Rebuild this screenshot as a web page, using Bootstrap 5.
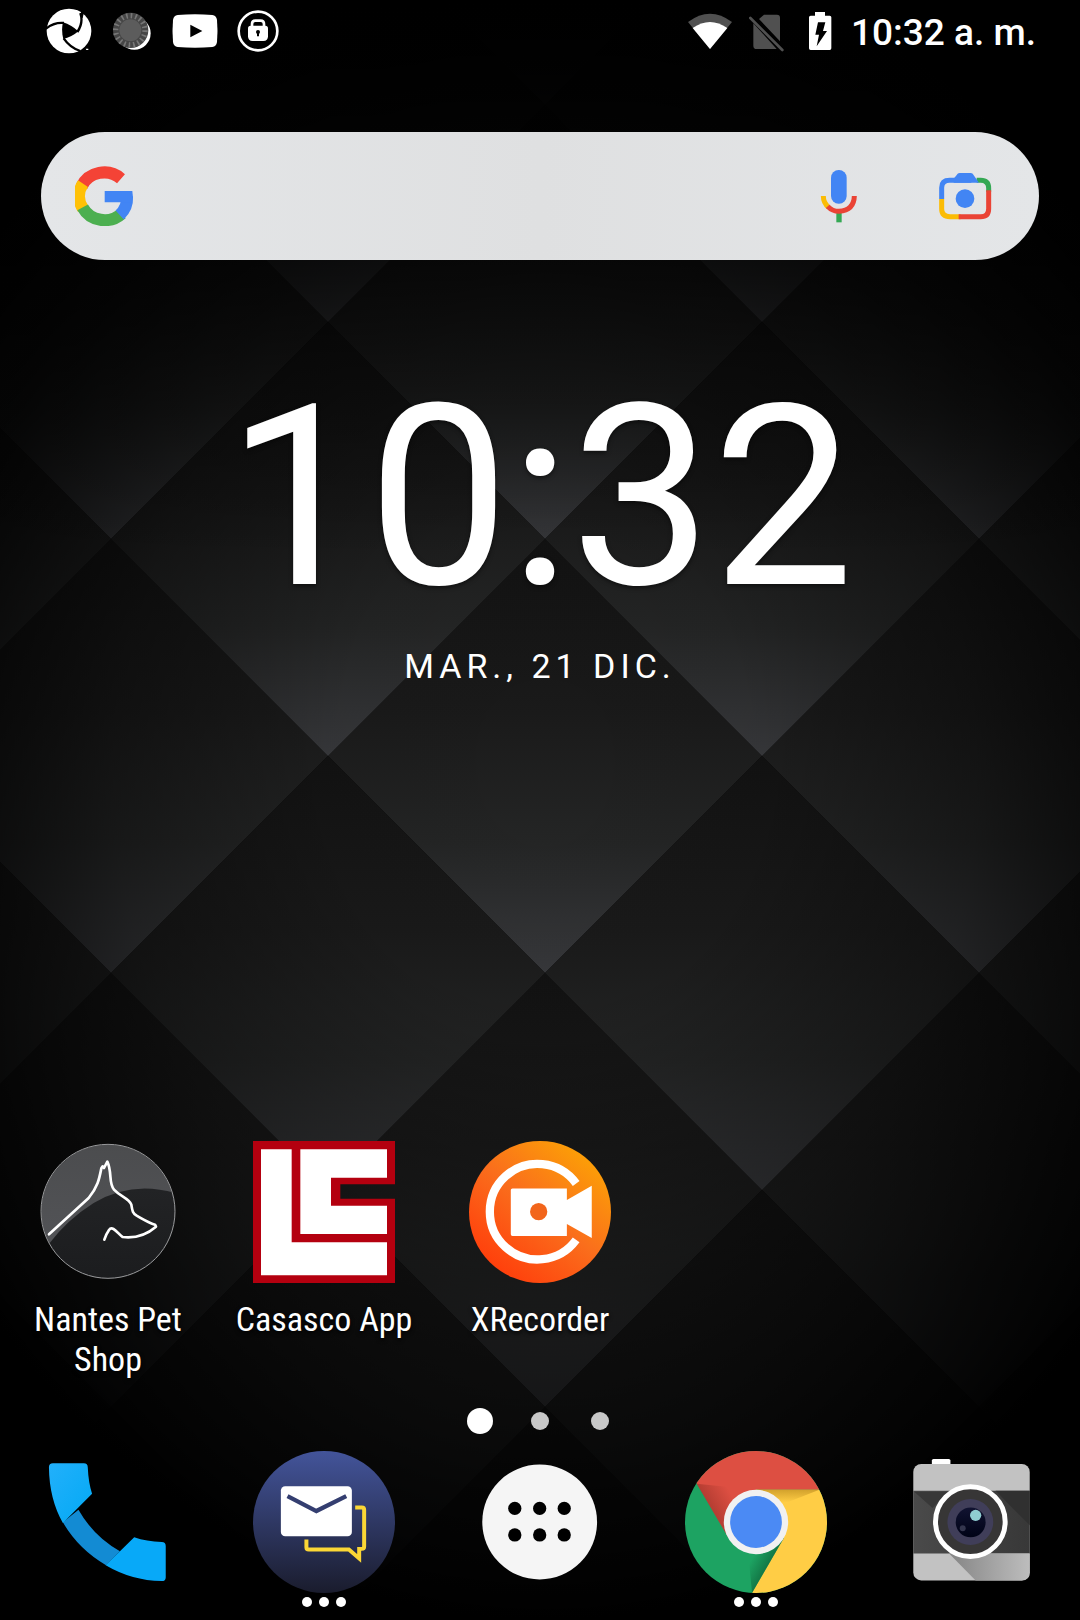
<!DOCTYPE html>
<html lang="es">
<head>
<meta charset="utf-8">
<meta name="viewport" content="width=device-width, initial-scale=1">
<title>Pantalla de inicio</title>
<link href="https://cdn.jsdelivr.net/npm/bootstrap@5.3.0/dist/css/bootstrap.min.css" rel="stylesheet">
<style>
body{background:#000;color:#fff;font-family:Roboto,"Liberation Sans",sans-serif}
svg{display:block;flex:none}
.wallpaper{z-index:-1}
.status-bar{height:62px;padding:0 44px 0 46px}
.status-icons{gap:17px}
.status-time{font-size:37px;font-weight:500;line-height:40px;padding-top:4px;margin-left:-4px}
.search-pill{height:128px;margin:70px 41px 0;padding:0 47px 0 34px;background:linear-gradient(90deg,#e4e6e8,#dfe0e1 50%,#e4e6e8)}
.search-pill input{min-width:0;height:100%;font-size:34px;box-shadow:none!important}
.search-tools{gap:72px}
.clock-time{font-size:252px;line-height:254px;margin-top:111px;text-shadow:0 2px 4px rgba(0,0,0,.5)}
.clock-date{font-size:34px;line-height:40px;margin-top:21px;letter-spacing:5px}
.app-link{gap:16px}
.app-label{font-family:"Roboto Condensed",Roboto,sans-serif;font-size:34px;line-height:40px;text-shadow:0 2px 4px #000}
.app-link svg,.dock-link svg.face{width:142px;height:142px}
.pager{height:26px;margin:29px 0 17px;gap:42px}
.page-dot{width:18px;height:18px;background:#c8c8c8}
.page-dot.current{width:26px;height:26px;background:#fff;margin:0 -4px}
.dock{padding-bottom:13px}
.running{height:10px;margin-top:4px;gap:7px}
.running span{width:10px;height:10px;background:#fff}
</style>
<script src="https://cdn.jsdelivr.net/npm/bootstrap@5.3.0/dist/js/bootstrap.bundle.min.js"></script>
</head>
<body>
<div class="position-relative min-vh-100 d-flex flex-column overflow-hidden z-0">
  <svg class="wallpaper position-absolute top-0 start-0 w-100 h-100" viewBox="0 0 1080 1620" preserveAspectRatio="xMidYMid slice" aria-hidden="true">
    <defs>
      <linearGradient id="facet" x1="0" y1="0" x2="0" y2="1"><stop offset="0" stop-color="#121212"/><stop offset=".4" stop-color="#1a1a1a"/><stop offset=".7" stop-color="#242525"/><stop offset="1" stop-color="#38393c"/></linearGradient>
      <pattern id="lattice" x="328" y="539" width="434" height="434" patternUnits="userSpaceOnUse">
        <path fill="url(#facet)" d="M217 0 434 217 217 434 0 217z"/>
        <path fill="url(#facet)" d="M0-217 217 0 0 217-217 0z"/>
        <path fill="url(#facet)" d="M434-217 651 0 434 217 217 0z"/>
        <path fill="url(#facet)" d="M0 217 217 434 0 651-217 434z"/>
        <path fill="url(#facet)" d="M434 217 651 434 434 651 217 434z"/>
      </pattern>
      <radialGradient id="shade" gradientUnits="userSpaceOnUse" cx="0" cy="0" r="1" gradientTransform="translate(545 780) scale(720 840)"><stop offset="0" stop-opacity="0"/><stop offset=".3" stop-opacity=".05"/><stop offset=".6" stop-opacity=".36"/><stop offset=".85" stop-opacity=".8"/><stop offset="1" stop-opacity="1"/></radialGradient>
      <linearGradient id="topShade" x1="0" y1="0" x2="0" y2="1"><stop offset="0" stop-opacity="1"/><stop offset=".1" stop-opacity=".9"/><stop offset=".55" stop-opacity=".42"/><stop offset="1" stop-opacity="0"/></linearGradient>
    </defs>
    <path fill="url(#lattice)" d="M0 0h1080v1620H0z"/>
    <path fill="url(#shade)" d="M0 0h1080v1620H0z"/>
    <path fill="url(#topShade)" d="M0 0h1080v560H0z"/>
  </svg>

  <header class="status-bar d-flex align-items-center justify-content-between">
    <div class="status-icons d-flex align-items-center">
      <svg width="46" height="46" viewBox="0 0 138 138"><circle cx="69" cy="69" r="67" fill="#fff"/><path d="M51 43Q76 51 97 70Q76 88 52 93Q45 66 51 43z"/><path d="M0 62Q25 42 54 45M103 15Q113 44 94 72M53 91Q72 119 103 129" fill="none" stroke="#000" stroke-width="7"/><path d="M105 10l8 7-3 12-5 5z"/><path d="M119 122h8v4h-6z" fill="#fff"/></svg>
      <svg width="46" height="46" viewBox="0 0 138 138"><circle cx="76" cy="76" r="49" fill="#fff"/><circle cx="65" cy="67" r="53" fill="#464646"/><circle cx="64" cy="67" r="44" fill="none" stroke="#777" stroke-width="16" stroke-dasharray="5 8.8"/><circle cx="64" cy="67" r="33" fill="#5c5c5c"/></svg>
      <svg width="46" height="46" viewBox="0 0 138 138"><path fill="#fff" d="M17 21Q69 17 121 21Q133 22 135 36Q138 69 135 102Q133 116 121 117Q69 121 17 117Q5 116 3 102Q0 69 3 36Q5 22 17 21z"/><path d="M55 50v38l36-19z"/></svg>
      <svg width="46" height="46" viewBox="0 0 138 138"><circle cx="69" cy="69" r="58" fill="none" stroke="#fff" stroke-width="8"/><path d="M51 57V48q0-10 10-10h16q10 0 10 10v9" fill="none" stroke="#fff" stroke-width="8"/><path fill="#fff" d="M47 53h44q8 0 8 8v24q0 14-14 14H53q-14 0-14-14V61q0-8 8-8z"/><circle cx="69" cy="72" r="6"/><path d="M66 73h6v12h-6z"/></svg>
    </div>
    <div class="status-icons d-flex align-items-center">
      <svg width="44" height="46" viewBox="0 8 132 138"><path fill="#505050" d="M0 50Q66 0 132 50L66 131z"/><path fill="#fff" d="M14 68Q66 32 118 68L66 131z"/></svg>
      <svg width="36" height="46" viewBox="0 7 108 138"><path fill="#505050" d="M30 40 45 27H84q9 0 9 9V107zM13 53V120q0 10 10 10H83z"/><path d="M4 37 100 133" stroke="#505050" stroke-width="8" stroke-linecap="round"/></svg>
      <svg width="36" height="46" viewBox="0 7 108 138"><path fill="#fff" d="M39 19h30v11h14q5 0 5 5v93q0 5-5 5H26q-5 0-5-5V35q0-5 5-5h13z"/><path d="M48 50H70L63 76H75L44 122 51 87H40z"/></svg>
      <time class="status-time">10:32 a. m.</time>
    </div>
  </header>

  <form class="search-pill rounded-pill d-flex align-items-center" role="search">
    <svg width="60" height="60" viewBox="0 0 180 180" aria-hidden="true">
      <g fill="none" stroke-width="36"><path stroke="#f44336" d="M20 61A74 70 0 0 1 138 38"/><path stroke="#ffc107" d="M24 53A74 70 0 0 0 24 128"/><path stroke="#4caf50" d="M23 124A74 70 0 0 0 140 143"/><path stroke="#4285f4" d="M134 147A72 70 0 0 0 156 92"/></g>
      <path fill="#4285f4" d="M89 75h83q4 18-1 34H89z"/>
    </svg>
    <input id="busqueda" type="search" class="form-control flex-grow-1 bg-transparent border-0" aria-label="Buscar">
    <div class="search-tools d-flex align-items-center">
      <button type="button" class="btn p-0 border-0" aria-label="Buscar por voz"><svg width="54" height="54" viewBox="0 0 162 162"><rect x="57" y="3" width="47" height="101" rx="23" fill="#4285f4"/><path fill="#34a853" d="M73 128h16v32H73z"/><path d="M34 81Q34 102 50 115" fill="none" stroke="#fbbc05" stroke-width="15"/><path d="M47 112Q61 127 81 127Q126 124 127 81" fill="none" stroke="#ea4335" stroke-width="15"/></svg></button>
      <button type="button" class="btn p-0 border-0" aria-label="Buscar con la cámara"><svg width="54" height="54" viewBox="0 0 162 162"><g fill="none" stroke-width="15"><path stroke="#4285f4" d="M11 90V56Q11 34 35 34H100"/><path stroke="#34a853" d="M116 34h12Q152 34 152 58V68"/><path stroke="#fbbc05" d="M11 90V120Q11 143 36 143H68"/><path stroke="#ea4335" d="M62 143H128Q152 143 152 119V64"/></g><path fill="#4285f4" d="M47 29 59 14Q61 12 65 12H98q4 0 6 2l19 27H47z"/><circle cx="81" cy="89" r="28" fill="#4285f4"/></svg></button>
    </div>
  </form>

  <section class="text-center" aria-label="Reloj">
    <time class="clock-time d-block">10:32</time>
    <div class="clock-date">MAR., 21 DIC.</div>
  </section>

  <main class="mt-auto">
    <div class="row row-cols-5 g-0">
      <div class="col">
        <a href="#" class="app-link d-flex flex-column align-items-center text-center text-white text-decoration-none">
          <svg viewBox="0 0 426 426" aria-hidden="true">
            <defs><clipPath id="petClip"><circle cx="213" cy="211" r="200"/></clipPath><linearGradient id="petTop" x1="0" y1="0" x2="0" y2="1"><stop stop-color="#4b4c4e"/><stop offset="1" stop-color="#55565a"/></linearGradient><linearGradient id="petLow" x1="0" y1="0" x2="0" y2="1"><stop stop-color="#222325"/><stop offset="1" stop-color="#1b1c1e"/></linearGradient></defs>
            <g clip-path="url(#petClip)"><path fill="url(#petTop)" d="M0 0h426v426H0z"/><path fill="url(#petLow)" d="M35 310Q90 236 170 186Q290 115 426 160V426H0z"/></g>
            <circle cx="213" cy="211" r="201" fill="none" stroke="#98999b" stroke-width="3"/>
            <path fill="none" stroke="#fff" stroke-width="8" stroke-linecap="round" stroke-linejoin="round" d="M36 280C75 244 115 208 155 171C183 137 187 112 193 82L197 76 201 81 211 62C226 94 214 126 231 146C252 169 276 171 283 191C286 210 287 217 299 224C321 236 332 244 354 251L357 257C335 276 300 293 257 288C245 281 227 251 216 267Q207 280 202 296"/>
          </svg>
          <span class="app-label">Nantes Pet<br>Shop</span>
        </a>
      </div>
      <div class="col">
        <a href="#" class="app-link d-flex flex-column align-items-center text-center text-white text-decoration-none">
          <svg viewBox="0 0 426 426" aria-hidden="true"><path fill="#b4000f" d="M0 0H426V130H262V173H426V426H0z"/><path fill="#fff" d="M24 25H116V304H402V403H24zM142 25H402V110H234V194H402V279H142z"/></svg>
          <span class="app-label">Casasco App</span>
        </a>
      </div>
      <div class="col">
        <a href="#" class="app-link d-flex flex-column align-items-center text-center text-white text-decoration-none">
          <svg viewBox="0 0 428 428" aria-hidden="true">
            <defs><linearGradient id="rec" x1=".2" y1=".9" x2=".85" y2=".1"><stop stop-color="#ff400c"/><stop offset=".5" stop-color="#fa6e1c"/><stop offset="1" stop-color="#fca006"/></linearGradient></defs>
            <circle cx="214" cy="214" r="214" fill="url(#rec)"/><path d="M323 128A144 144 0 1 0 323 298" fill="none" stroke="#fff" stroke-width="25"/><path fill="#fff" d="M131 143H295V178L370 135V292L295 250V286H131q-5 0-5-5V148q0-5 5-5z"/><circle cx="210" cy="213" r="26" fill="#f2651b"/>
          </svg>
          <span class="app-label">XRecorder</span>
        </a>
      </div>
    </div>
  </main>

  <div class="pager d-flex align-items-center justify-content-center" aria-label="Página 1 de 3">
    <span class="page-dot current rounded-circle"></span><span class="page-dot rounded-circle"></span><span class="page-dot rounded-circle"></span>
  </div>

  <nav class="dock row row-cols-5 g-0" aria-label="Favoritos">
    <div class="col">
      <a href="#" class="dock-link d-flex flex-column align-items-center" aria-label="Teléfono"><svg class="face" viewBox="0 0 428 428">
        <defs><linearGradient id="tel" x1="0" y1="0" x2="1" y2="1"><stop stop-color="#22b0fb"/><stop offset="1" stop-color="#03a9f4"/></linearGradient></defs>
        <path fill="#138bd3" d="M78 215 125 177Q171 258 250 302L208 344Q125 296 78 215z"/><path fill="url(#tel)" d="M48 37H141q12 0 12 12Q155 95 166 129L78 217Q37 145 36 49q0-12 12-12z"/><path fill="#08a9f8" d="M207 344 293 260Q330 273 376 274q12 0 12 12V381q0 11-12 11Q285 390 207 344z"/>
      </svg></a>
    </div>
    <div class="col">
      <a href="#" class="dock-link d-flex flex-column align-items-center" aria-label="Mensajes"><svg class="face" viewBox="0 0 428 428">
        <defs><linearGradient id="msg" x1="0" y1="0" x2="0" y2="1"><stop stop-color="#43549a"/><stop offset="1" stop-color="#1a1c2d"/></linearGradient></defs>
        <circle cx="214" cy="214" r="214" fill="url(#msg)"/><rect x="84" y="106" width="214" height="151" rx="13" fill="#fff"/><path d="M104 136 191 181 281 136" fill="none" stroke="#343e70" stroke-width="13"/><path d="M308 170H328q7 0 7 7V288q0 7-7 7H320V324L289 297H168q-7 0-7-7V267" fill="none" stroke="#fbd735" stroke-width="12"/>
      </svg>
      <span class="running d-flex"><span class="rounded-circle"></span><span class="rounded-circle"></span><span class="rounded-circle"></span></span></a>
    </div>
    <div class="col">
      <a href="#" class="dock-link d-flex flex-column align-items-center" aria-label="Aplicaciones"><svg class="face" viewBox="0 0 428 428"><circle cx="213" cy="214" r="173" fill="#f5f5f5"/><g fill="#000"><circle cx="138" cy="173" r="20"/><circle cx="213" cy="173" r="20"/><circle cx="287" cy="173" r="20"/><circle cx="138" cy="253" r="20"/><circle cx="213" cy="253" r="20"/><circle cx="287" cy="253" r="20"/></g></svg></a>
    </div>
    <div class="col">
      <a href="#" class="dock-link d-flex flex-column align-items-center" aria-label="Chrome"><svg class="face" viewBox="0 0 428 428">
        <defs>
          <clipPath id="disc"><circle cx="214" cy="214" r="214"/></clipPath>
          <linearGradient id="redShade" gradientUnits="userSpaceOnUse" x1="80" y1="178" x2="145" y2="140"><stop stop-color="#8c2b22" stop-opacity=".5"/><stop offset="1" stop-color="#8c2b22" stop-opacity="0"/></linearGradient>
          <linearGradient id="yellowShade" gradientUnits="userSpaceOnUse" x1="0" y1="117" x2="0" y2="155"><stop stop-color="#b5851c" stop-opacity=".6"/><stop offset="1" stop-color="#b5851c" stop-opacity="0"/></linearGradient>
          <linearGradient id="greenShade" gradientUnits="userSpaceOnUse" x1="246" y1="354" x2="200" y2="328"><stop stop-color="#0c5a33" stop-opacity=".6"/><stop offset="1" stop-color="#0c5a33" stop-opacity="0"/></linearGradient>
        </defs>
        <g clip-path="url(#disc)"><path fill="#1da362" d="M0 0h428v428H0z"/><path fill="#dd4f42" d="M-22 0H428V117H214L130 260z"/><path fill="#ffcd45" d="M214 117H428V428H202L298 262z"/><path fill="url(#redShade)" d="M35 99 130 260 214 117z"/><path fill="url(#yellowShade)" d="M214 117H405L290 162z"/><path fill="url(#greenShade)" d="M202 428 298 262 190 300z"/></g>
        <circle cx="214" cy="214" r="97" fill="#f1f1f1"/><circle cx="214" cy="214" r="78" fill="#4b8af4"/>
      </svg>
      <span class="running d-flex"><span class="rounded-circle"></span><span class="rounded-circle"></span><span class="rounded-circle"></span></span></a>
    </div>
    <div class="col">
      <a href="#" class="dock-link d-flex flex-column align-items-center" aria-label="Cámara"><svg class="face" viewBox="0 0 428 428">
        <defs><linearGradient id="castLow" x1="0" y1="0" x2="1" y2="0"><stop stop-color="#858585"/><stop offset="1" stop-color="#bdbdbd"/></linearGradient><linearGradient id="band" x1="0" y1="0" x2="1" y2="0"><stop stop-color="#4a4a4a"/><stop offset="1" stop-color="#383838"/></linearGradient><linearGradient id="glass" x1="0" y1="0" x2="0" y2="1"><stop stop-color="#111331"/><stop offset="1" stop-color="#000316"/></linearGradient></defs>
        <path fill="#fff" d="M93 29q0-5 5-5h46q5 0 5 5v14H93z"/><rect x="37" y="39" width="351" height="351" rx="24" fill="#c2c2c2"/><path fill="url(#band)" d="M37 120H388V309H37z"/><path fill="#383838" d="M40 123H140L95 172z"/><path fill="#303030" d="M285 120H388V224z"/><path fill="url(#castLow)" d="M145 309H388V366q0 24-24 24H225z"/>
        <circle cx="209" cy="213" r="105" fill="#373636" stroke="#fff" stroke-width="15"/><circle cx="209" cy="214" r="69" fill="#403e59"/><circle cx="210" cy="215" r="45" fill="url(#glass)"/><circle cx="225" cy="194" r="17" fill="#8fcdd1"/><circle cx="186" cy="233" r="9" fill="#34364e"/>
      </svg></a>
    </div>
  </nav>
</div>
</body>
</html>
